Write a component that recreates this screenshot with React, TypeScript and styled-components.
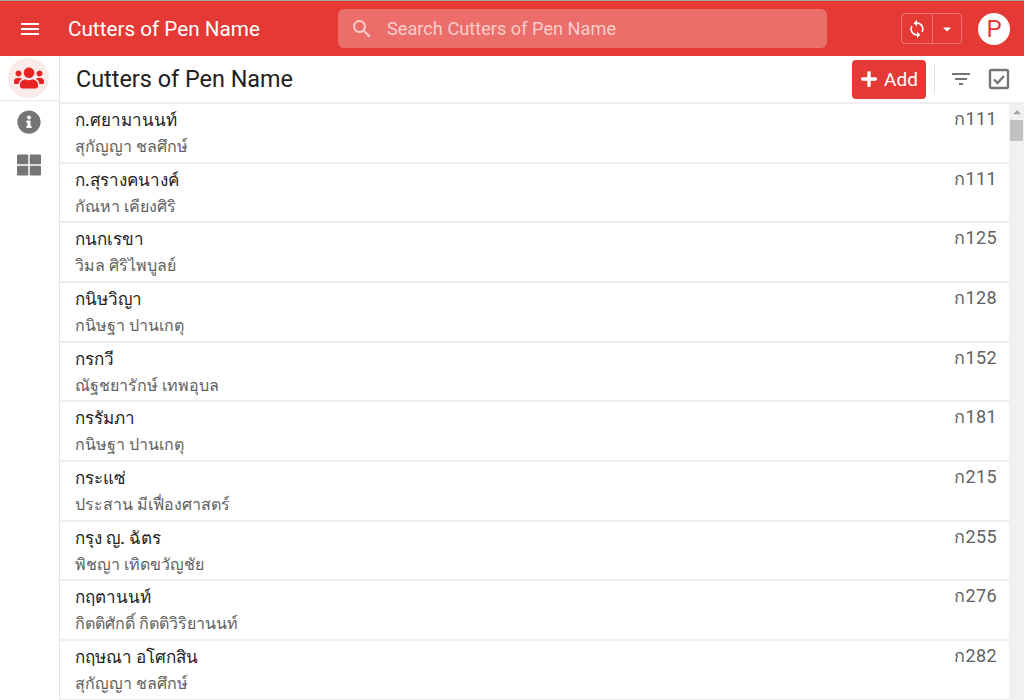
import React from "react";
import styled, { createGlobalStyle } from "styled-components";
import { FaUsers, FaInfoCircle, FaThLarge, FaPlus, FaCaretDown, FaCaretUp } from "react-icons/fa";
import { MdMenu, MdSearch, MdFilterList, MdSync } from "react-icons/md";

const Global = createGlobalStyle`
  html, body { margin: 0; padding: 0; height: 100%; overflow: hidden; }
  body { font-family: Roboto, "Noto Sans", "Liberation Sans", sans-serif; background: #fff; }
  * { box-sizing: border-box; }
`;

const Page = styled.div`
  width: 1024px;
  height: 700px;
  display: flex;
  flex-direction: column;
  border-top: 1px solid #a3a89c;
  overflow: hidden;
`;
const Header = styled.header`
  flex: 0 0 55px;
  height: 55px;
  background: #e53935;
  display: flex;
  align-items: center;
  color: #fff;
`;
const MenuButton = styled.div`
  width: 59px;
  display: flex;
  justify-content: center;
  align-items: center;
  font-size: 24px;
`;
const AppTitle = styled.div`
  width: 270px;
  padding-left: 9px;
  font-size: 20.7px;
  font-weight: 400;
  line-height: 24px;
  white-space: nowrap;
`;
const SearchBox = styled.div`
  margin-left: 9px;
  width: 489px;
  height: 39px;
  border-radius: 6px;
  background: rgba(255, 255, 255, 0.27);
  display: flex;
  align-items: center;
  padding-left: 12px;
  gap: 13px;
  color: rgba(255, 255, 255, 0.66);
  font-size: 18.2px;
`;
const SyncGroup = styled.div`
  margin-left: 74px;
  width: 61px;
  height: 31px;
  border: 1px solid rgba(255, 255, 255, 0.3);
  border-radius: 4px;
  display: flex;
  align-items: stretch;
`;
const SyncPart = styled.div<{ $w: number; $split?: boolean }>`
  width: ${(p) => p.$w}px;
  display: flex;
  align-items: center;
  justify-content: center;
  ${(p) => (p.$split ? "border-left: 1px solid rgba(255,255,255,0.3);" : "")}
`;
const Avatar = styled.div`
  margin-left: 16px;
  width: 32px;
  height: 32px;
  border-radius: 50%;
  background: #fff;
  color: #e53935;
  font-size: 24px;
  font-weight: 400;
  line-height: 32px;
  text-align: center;
`;
const Body = styled.div`
  flex: 1;
  display: flex;
  min-height: 0;
`;
const Side = styled.nav`
  width: 60px;
  flex: 0 0 60px;
  border-right: 1px solid #e4e4e4;
  display: flex;
  flex-direction: column;
  align-items: center;
  background: #fff;
`;
const ActiveTab = styled.div`
  width: 100%;
  height: 45px;
  border-bottom: 1px solid #e5e5e5;
  display: flex;
  justify-content: center;
  padding: 2px 2px 0 0;
`;
const ActiveCircle = styled.div`
  width: 41px;
  height: 40px;
  border-radius: 50%;
  background: #fbeaea;
  color: #e62222;
  display: flex;
  align-items: center;
  justify-content: center;
  font-size: 30px;
`;
const SideIcon = styled.div<{ $top: number; $size: number }>`
  margin-top: ${(p) => p.$top}px;
  margin-right: 2px;
  height: ${(p) => p.$size}px;
  color: #757575;
  font-size: ${(p) => p.$size}px;
  display: flex;
`;
const Main = styled.main`
  flex: 1;
  min-width: 0;
  display: flex;
  flex-direction: column;
`;
const Toolbar = styled.div`
  flex: 0 0 48px;
  height: 48px;
  border-bottom: 2px solid #eeeeee;
  display: flex;
  align-items: center;
  padding-left: 16px;
`;
const PageTitle = styled.h1`
  margin: 0;
  flex: 1;
  font-size: 23.4px;
  font-weight: 400;
  line-height: 48px;
  color: #212121;
`;
const AddButton = styled.div`
  width: 74px;
  height: 39px;
  border-radius: 4px;
  background: #e53935;
  color: #fff;
  display: flex;
  align-items: center;
  justify-content: center;
  gap: 6px;
  font-size: 19px;
`;
const Divider = styled.div`
  width: 1px;
  height: 28px;
  margin: 0 14px 0 8px;
  background: #e0e0e0;
`;
const ToolIcon = styled.div<{ $right: number }>`
  display: flex;
  color: #757575;
  font-size: 24px;
  margin-right: ${(p) => p.$right}px;
`;
const ListArea = styled.div`
  flex: 1;
  min-height: 0;
  display: flex;
`;
const List = styled.ul`
  list-style: none;
  margin: 0;
  padding: 0;
  flex: 1;
  min-width: 0;
  overflow: hidden;
`;
const Row = styled.li`
  height: 59.67px;
  border-bottom: 2px solid #eeeeee;
  padding: 0 12px 0 15px;
  display: flex;
  justify-content: space-between;
`;
const Names = styled.div`
  display: flex;
  flex-direction: column;
`;
const Primary = styled.div`
  font-size: 17px;
  line-height: 24px;
  margin-top: 4px;
  font-weight: 500;
  color: #212121;
  white-space: nowrap;
`;
const Secondary = styled.div`
  font-size: 16px;
  line-height: 20px;
  margin-top: 5px;
  color: #616161;
  white-space: nowrap;
`;
const Code = styled.div`
  font-size: 18px;
  line-height: 24px;
  margin-top: 3px;
  letter-spacing: 0.4px;
  color: #616161;
`;
const Scrollbar = styled.div`
  width: 15px;
  flex: 0 0 15px;
  background: #f1f1f1;
  display: flex;
  flex-direction: column;
  align-items: center;
  color: #a3a3a3;
`;
const ScrollArrow = styled.div`
  height: 16px;
  display: flex;
  align-items: center;
  justify-content: center;
  font-size: 12px;
`;
const ScrollThumb = styled.div`
  width: 13px;
  height: 21px;
  background: #c1c1c1;
`;

const CheckIcon = () => (
  <svg width="24" height="24" viewBox="0 0 24 24" fill="none">
    <rect x="3" y="3" width="18" height="18" rx="1.5" stroke="currentColor" strokeWidth="2.4" />
    <path d="M7 12.5l3.5 3.5L17 9" stroke="currentColor" strokeWidth="2.4" />
  </svg>
);

const rows = [
  ["ก.ศยามานนท์", "สุกัญญา ชลศึกษ์", "ก111"],
  ["ก.สุรางคนางค์", "กัณหา เคียงศิริ", "ก111"],
  ["กนกเรขา", "วิมล ศิริไพบูลย์", "ก125"],
  ["กนิษวิญา", "กนิษฐา ปานเกตุ", "ก128"],
  ["กรกวี", "ณัฐชยารักษ์ เทพอุบล", "ก152"],
  ["กรรัมภา", "กนิษฐา ปานเกตุ", "ก181"],
  ["กระแซ่", "ประสาน มีเฟื่องศาสตร์", "ก215"],
  ["กรุง ญ. ฉัตร", "พิชญา เทิดขวัญชัย", "ก255"],
  ["กฤตานนท์", "กิตติศักดิ์ กิตติวิริยานนท์", "ก276"],
  ["กฤษณา อโศกสิน", "สุกัญญา ชลศึกษ์", "ก282"],
];

export default function App() {
  return (
    <Page>
      <Global />
      <Header>
        <MenuButton><MdMenu /></MenuButton>
        <AppTitle>Cutters of Pen Name</AppTitle>
        <SearchBox>
          <MdSearch size={24} />
          <span>Search Cutters of Pen Name</span>
        </SearchBox>
        <SyncGroup>
          <SyncPart $w={30}><MdSync size={20} /></SyncPart>
          <SyncPart $w={29} $split><FaCaretDown size={12} /></SyncPart>
        </SyncGroup>
        <Avatar>P</Avatar>
      </Header>
      <Body>
        <Side>
          <ActiveTab><ActiveCircle><FaUsers /></ActiveCircle></ActiveTab>
          <SideIcon $top={9} $size={24}><FaInfoCircle /></SideIcon>
          <SideIcon $top={19} $size={24}><FaThLarge /></SideIcon>
        </Side>
        <Main>
          <Toolbar>
            <PageTitle>Cutters of Pen Name</PageTitle>
            <AddButton><FaPlus size={18} />Add</AddButton>
            <Divider />
            <ToolIcon $right={14}><MdFilterList /></ToolIcon>
            <ToolIcon $right={13}><CheckIcon /></ToolIcon>
          </Toolbar>
          <ListArea>
            <List>
              {rows.map(([a, b, c]) => (
                <Row key={a}>
                  <Names>
                    <Primary>{a}</Primary>
                    <Secondary>{b}</Secondary>
                  </Names>
                  <Code>{c}</Code>
                </Row>
              ))}
            </List>
            <Scrollbar>
              <ScrollArrow><FaCaretUp /></ScrollArrow>
              <ScrollThumb />
            </Scrollbar>
          </ListArea>
        </Main>
      </Body>
    </Page>
  );
}
